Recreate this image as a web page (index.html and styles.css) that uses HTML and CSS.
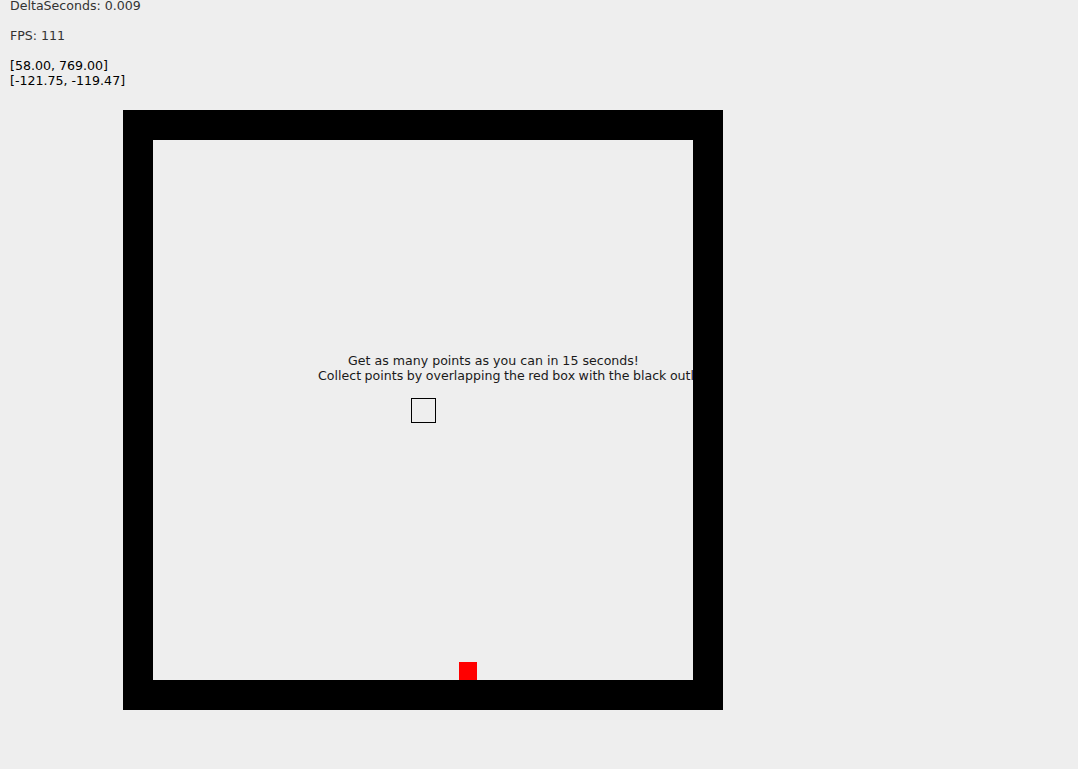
FILE: index.html
```html
<!DOCTYPE html>
<html>
<head>
<meta charset="utf-8">
<link rel="stylesheet" href="styles.css">
</head>
<body>
<div class="hud">
  <div class="line muted">DeltaSeconds: 0.009</div>
  <div class="line blank"></div>
  <div class="line muted">FPS: 111</div>
  <div class="line blank"></div>
  <div class="line">[58.00, 769.00]</div>
  <div class="line">[-121.75, -119.47]</div>
</div>
<div class="arena">
  <div class="field">
    <div class="instructions">
      <div class="l1">Get as many points as you can in 15 seconds!</div>
      <div class="l2">Collect points by overlapping the red box with the black outlined box</div>
    </div>
    <div class="target"></div>
    <div class="player"></div>
  </div>
</div>
</body>
</html>
```

FILE: styles.css
```css
html, body {
  margin: 0;
  padding: 0;
  background: #eeeeee;
  width: 1078px;
  height: 769px;
  overflow: hidden;
  font-family: "DejaVu Sans", sans-serif;
}

.hud {
  padding-left: 10px;
  margin-top: -2px;
  font-size: 12.6px;
  line-height: 15px;
  color: #000;
}

.line { height: 15px; white-space: pre; }
.muted { color: #333; }

.arena {
  margin-left: 123px;
  margin-top: 22px;
  width: 540px;
  height: 540px;
  border: 30px solid #000;
}

.field {
  position: relative;
  width: 540px;
  height: 540px;
  overflow: hidden;
}

.instructions {
  position: absolute;
  left: 165px;
  top: 213px;
  font-size: 12.6px;
  line-height: 15px;
  color: #1a1a1a;
  white-space: nowrap;
}

.l1 { padding-left: 30px; }
.l2 { word-spacing: -0.5px; }

.target {
  position: absolute;
  left: 258px;
  top: 258px;
  width: 23px;
  height: 23px;
  border: 1px solid #000;
}

.player {
  position: absolute;
  left: 306px;
  top: 522px;
  width: 18px;
  height: 18px;
  background: #ff0000;
}
```
